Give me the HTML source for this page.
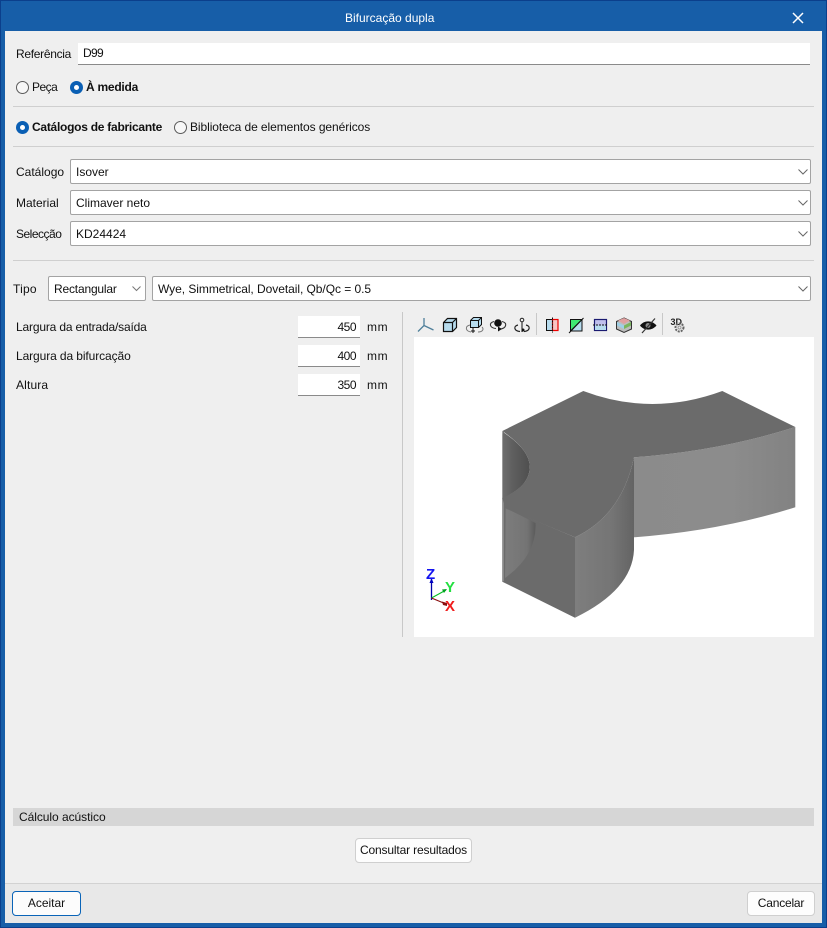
<!DOCTYPE html>
<html><head><meta charset="utf-8">
<style>
*{box-sizing:border-box}
html,body{margin:0;padding:0;width:827px;height:928px;overflow:hidden;background:#175ea8}
body{font:12px/16px "Liberation Sans",sans-serif;color:#111;position:relative}
.a{position:absolute;white-space:nowrap}
.t{position:absolute;white-space:nowrap;height:16px}
.hr{position:absolute;left:13px;width:801px;height:1px;background:#cfcfcf}
.inp{position:absolute;background:#fff;border-bottom:1px solid #8a8a8a;padding:2px 5px;line-height:16px}
.sel{position:absolute;background:#fff;border:1px solid #a3a3a3;border-radius:2px;height:25px;padding:4px 5px 0;line-height:16px}
.sel svg{position:absolute;right:2px;top:9px}
.num{text-align:right;padding:3px 4px 0 0;width:62px;height:22px;letter-spacing:-.5px}
.r{position:absolute;width:13px;height:13px;border-radius:50%;border:1px solid #5a5a5a;background:#f7f7f7}
.r.on{border:0;background:#0a5fb4}
.r.on:after{content:"";position:absolute;left:4px;top:4px;width:5px;height:5px;border-radius:50%;background:#fff}
.btn{position:absolute;background:#fdfdfd;border:1px solid #cfcfcf;border-radius:4px;text-align:center;height:25px;line-height:23px}
</style></head><body>
<div class="a" style="left:0;top:0;width:827px;height:1px;background:#0b3f8c"></div>
<div class="a" style="left:0;top:0;width:1px;height:928px;background:#0b3f8c"></div>
<div class="a" style="left:826px;top:0;width:1px;height:928px;background:#0b3f8c"></div>
<div class="a" style="left:0;top:927px;width:827px;height:1px;background:#0b3f8c"></div>
<div class="t" style="left:345px;top:10px;color:#fff">Bifurcação dupla</div>
<svg class="a" style="left:792px;top:12px" width="12" height="12"><path d="M1 1L11 11M11 1L1 11" stroke="#fff" stroke-width="1.500"/></svg>

<div class="a" style="left:5px;top:31px;width:817px;height:892px;background:#efefef"></div>
<div class="a" style="left:5px;top:883px;width:817px;height:40px;background:#e8e8e8;border-top:1px solid #d2d2d2"></div>

<div class="t" style="left:16px;top:46px;letter-spacing:-.3px">Referência</div>
<div class="inp" style="left:78px;top:43px;width:732px;height:22px;letter-spacing:-.7px">D99</div>

<div class="r" style="left:16px;top:81px"></div><div class="t" style="left:32px;top:79px;letter-spacing:-.5px">Peça</div>
<div class="r on" style="left:70px;top:81px"></div><div class="t" style="left:86px;top:79px;font-weight:bold;letter-spacing:-.25px">À medida</div>
<div class="hr" style="top:106px"></div>
<div class="r on" style="left:16px;top:121px"></div><div class="t" style="left:32px;top:119px;font-weight:bold;letter-spacing:-.26px">Catálogos de fabricante</div>
<div class="r" style="left:174px;top:121px"></div><div class="t" style="left:190px;top:119px;letter-spacing:-.08px">Biblioteca de elementos genéricos</div>
<div class="hr" style="top:146px"></div>

<div class="t" style="left:16px;top:164px">Catálogo</div>
<div class="sel" style="left:70px;top:159px;width:741px">Isover<svg width="10" height="6"><path d="M.5 .5L5 5L9.500 .5" fill="none" stroke="#666"/></svg></div>
<div class="t" style="left:16px;top:195px">Material</div>
<div class="sel" style="left:70px;top:190px;width:741px">Climaver neto<svg width="10" height="6"><path d="M.5 .5L5 5L9.500 .5" fill="none" stroke="#666"/></svg></div>
<div class="t" style="left:16px;top:226px;letter-spacing:-.5px">Selecção</div>
<div class="sel" style="left:70px;top:221px;width:741px">KD24424<svg width="10" height="6"><path d="M.5 .5L5 5L9.500 .5" fill="none" stroke="#666"/></svg></div>
<div class="hr" style="top:260px"></div>

<div class="t" style="left:13px;top:281px;letter-spacing:.2px">Tipo</div>
<div class="sel" style="left:48px;top:276px;width:98px;letter-spacing:-.18px">Rectangular<svg style="right:4px" width="9" height="6"><path d="M.5 .5L4.500 4.500L8.500 .5" fill="none" stroke="#777"/></svg></div>
<div class="sel" style="left:152px;top:276px;width:659px;letter-spacing:-.05px">Wye, Simmetrical, Dovetail, Qb/Qc = 0.5<svg width="10" height="6"><path d="M.5 .5L5 5L9.500 .5" fill="none" stroke="#666"/></svg></div>

<div class="t" style="left:16px;top:319px;letter-spacing:-.17px">Largura da entrada/saída</div>
<div class="inp num" style="left:298px;top:316px">450</div><div class="t" style="left:367px;top:319px;letter-spacing:.6px">mm</div>
<div class="t" style="left:16px;top:348px;letter-spacing:-.1px">Largura da bifurcação</div>
<div class="inp num" style="left:298px;top:345px">400</div><div class="t" style="left:367px;top:348px;letter-spacing:.6px">mm</div>
<div class="t" style="left:16px;top:377px;letter-spacing:.15px">Altura</div>
<div class="inp num" style="left:298px;top:374px">350</div><div class="t" style="left:367px;top:377px;letter-spacing:.6px">mm</div>

<div class="a" style="left:402px;top:312px;width:1px;height:325px;background:#c8c8c8"></div>

<!-- toolbar -->
<svg class="a" style="left:400px;top:305px" width="310" height="32" viewBox="400 305 310 32" fill="none">
 <path d="M424 325.500V318M424 325.500L418 331.500M424 325.500L433.500 330" stroke="#4f7f9a" stroke-width="1.300"/>
 <path d="M443.500 322.500L447.500 318.500H456.500V327.500L452.500 331.500H443.500ZM443.500 322.500H452.500V331.500M452.500 322.500L456.500 318.500" fill="#b7dcee" stroke="#111" stroke-width="1.200"/>
 <path d="M470.500 320.500L473.500 317.500H481.500V324.500L478.500 327.500H470.500ZM470.500 320.500H478.500V327.500M478.500 320.500L481.500 317.500" fill="#b7dcee" stroke="#111"/>
 <path d="M470 325C465 326 465 331 471 332M478 332C483 332 484 329 482 327" stroke="#777"/><path d="M473 328V333M471 331H475" stroke="#111"/>
 <circle cx="498" cy="323" r="3.800" fill="#111"/><path d="M494 321.500C488 323 490 328 496 328.500M502 321.500C508 323 506 328 501 329" stroke="#333" stroke-width="1.100"/><path d="M498 326.500L502 329L498 331.500Z" fill="#111"/>
 <circle cx="522" cy="320" r="1.800" stroke="#222"/><path d="M522 322V332" stroke="#111"/><path d="M518 325C513 326 514 331 520 331.500M526 325C531 326 530 331 524 331.500" stroke="#222" stroke-width="1.200"/><circle cx="523" cy="330" r="1.500" fill="#111"/>
 <rect x="546.500" y="319.500" width="6" height="11" fill="#b7dcee" stroke="#111"/><rect x="552.500" y="319.500" width="5.500" height="11" fill="#f7c5c5" stroke="#e00" stroke-width="1.200"/><path d="M552.500 317.500V333" stroke="#111" stroke-dasharray="2 1"/>
 <path d="M570.500 331V319.500H582V331Z" fill="#b7dcee" stroke="#111"/><path d="M570.500 331V319.500H582Z" fill="#3fe873" stroke="#111"/><path d="M569 333L583.500 318" stroke="#111"/>
 <rect x="594.500" y="319.500" width="12" height="11" fill="#c0c0ec" stroke="#1a1a70" stroke-width="1.200"/><rect x="595" y="325.500" width="11" height="4.500" fill="#b7dcee"/><path d="M593 325H608" stroke="#111" stroke-dasharray="2 1"/>
 <path d="M624 318L631.500 321.500V329L624 332.500L616.500 329V321.500Z" fill="#bdbdbd" stroke="#333"/><path d="M618 320.500L624 318L630 320.500L624 324Z" fill="#e0a0a0"/><path d="M617 322L624 325.500L624 329L617 325.500Z" fill="#9ed0e6"/><path d="M631 322L624 325.500L624 329L631 325.500Z" fill="#7ab55c"/>
 <path d="M640 325.500C644 320 652 320 656.500 325.500C652 331 644 331 640 325.500Z" fill="#111"/><circle cx="648" cy="325.500" r="2.500" fill="#888"/><path d="M642 333L655 318.500" stroke="#333" stroke-width="1.200"/>
 <text x="670.500" y="325" font-family="Liberation Sans" font-size="9" font-weight="bold" fill="#222">3D</text>
 <circle cx="679.500" cy="327.500" r="4" stroke="#666" stroke-width="2" stroke-dasharray="2 1"/><circle cx="679.500" cy="327.500" r="1.500" stroke="#999"/>
 <path d="M536.500 313V335M662.500 313V335" stroke="#c8c8c8"/>
</svg>

<!-- viewport -->
<svg class="a" style="left:414px;top:337px;background:#fff" width="400" height="300" viewBox="414 337 400 300">
 <defs>
  <linearGradient id="g1" x1="634" x2="796" y1="0" y2="0" gradientUnits="userSpaceOnUse"><stop offset="0" stop-color="#8b8b8b"/><stop offset=".6" stop-color="#8c8c8c"/><stop offset="1" stop-color="#828282"/></linearGradient>
  <linearGradient id="g2" x1="575" x2="636" y1="0" y2="0" gradientUnits="userSpaceOnUse"><stop offset="0" stop-color="#7e7e7e"/><stop offset=".6" stop-color="#757575"/><stop offset="1" stop-color="#626262"/></linearGradient>
  <linearGradient id="g3" x1="502" x2="530" y1="0" y2="0" gradientUnits="userSpaceOnUse"><stop offset="0" stop-color="#6e6e6e"/><stop offset=".4" stop-color="#5e5e5e"/><stop offset="1" stop-color="#4f4f4f"/></linearGradient>
  <linearGradient id="g4" x1="506" x2="536" y1="0" y2="0" gradientUnits="userSpaceOnUse"><stop offset="0" stop-color="#7c7c7c"/><stop offset=".7" stop-color="#747474"/><stop offset="1" stop-color="#5a5a5a"/></linearGradient>
 </defs>
 <path d="M634 457.300Q720 451 795.300 427V507.300Q720 531 634 537.300Z" fill="url(#g1)"/>
 <path d="M575 537.300Q622 515 634 457.300V550Q632 590 575 617.700Z" fill="url(#g2)"/>
 <path d="M502.300 431V581.700L575 617.700V537.300L505.700 508V498Z" fill="#6b6b6b"/>
 <path d="M502.300 431L504 432V581L502.300 581.700Z" fill="#8a8a8a"/>
 <path d="M505.700 508L535.500 523Q537 555 505 578Z" fill="url(#g4)"/>
 <path d="M503 432Q530 450 529.700 467Q530 486 503 498Z" fill="url(#g3)"/>
 <path d="M502.300 431L583.300 391Q652 417 722.300 391L795.300 427Q720 451 634 457.300Q622 515 575 537.300L505.700 508.500L502.300 498Q530 486 529.700 467Q530 450 502.300 431Z" fill="#6b6b6b"/>
 <path d="M431.500 600V578" stroke="#0000a8" stroke-width="1.300"/><path d="M429.500 583L431.500 578L433.500 583Z" fill="#0000c0"/>
 <path d="M431.500 598L446 590" stroke="#00c020"/><path d="M442 589.500L447 589L444 593Z" fill="#00a020"/>
 <path d="M431.500 598L446 604" stroke="#8b1010" stroke-width="1.200"/><path d="M442 601.500L447 603L447 606L443 605Z" fill="#8b1010"/>
 <text x="426" y="579" font-family="Liberation Sans" font-size="15" font-weight="bold" fill="#1414f0">Z</text>
 <text x="445" y="592" font-family="Liberation Sans" font-size="15" font-weight="bold" fill="#22e040">Y</text>
 <text x="445" y="611" font-family="Liberation Sans" font-size="15" font-weight="bold" fill="#f01c1c">X</text>
</svg>

<div class="a" style="left:13px;top:808px;width:801px;height:18px;background:#d6d6d6"></div>
<div class="t" style="left:19px;top:809px;letter-spacing:-.05px">Cálculo acústico</div>
<div class="btn" style="left:355px;top:838px;width:117px;letter-spacing:-.15px">Consultar resultados</div>
<div class="btn" style="left:12px;top:891px;width:69px;border-color:#0a64b8;background:#fcfcfc">Aceitar</div>
<div class="btn" style="left:747px;top:891px;width:68px;letter-spacing:-.2px">Cancelar</div>
</body></html>
